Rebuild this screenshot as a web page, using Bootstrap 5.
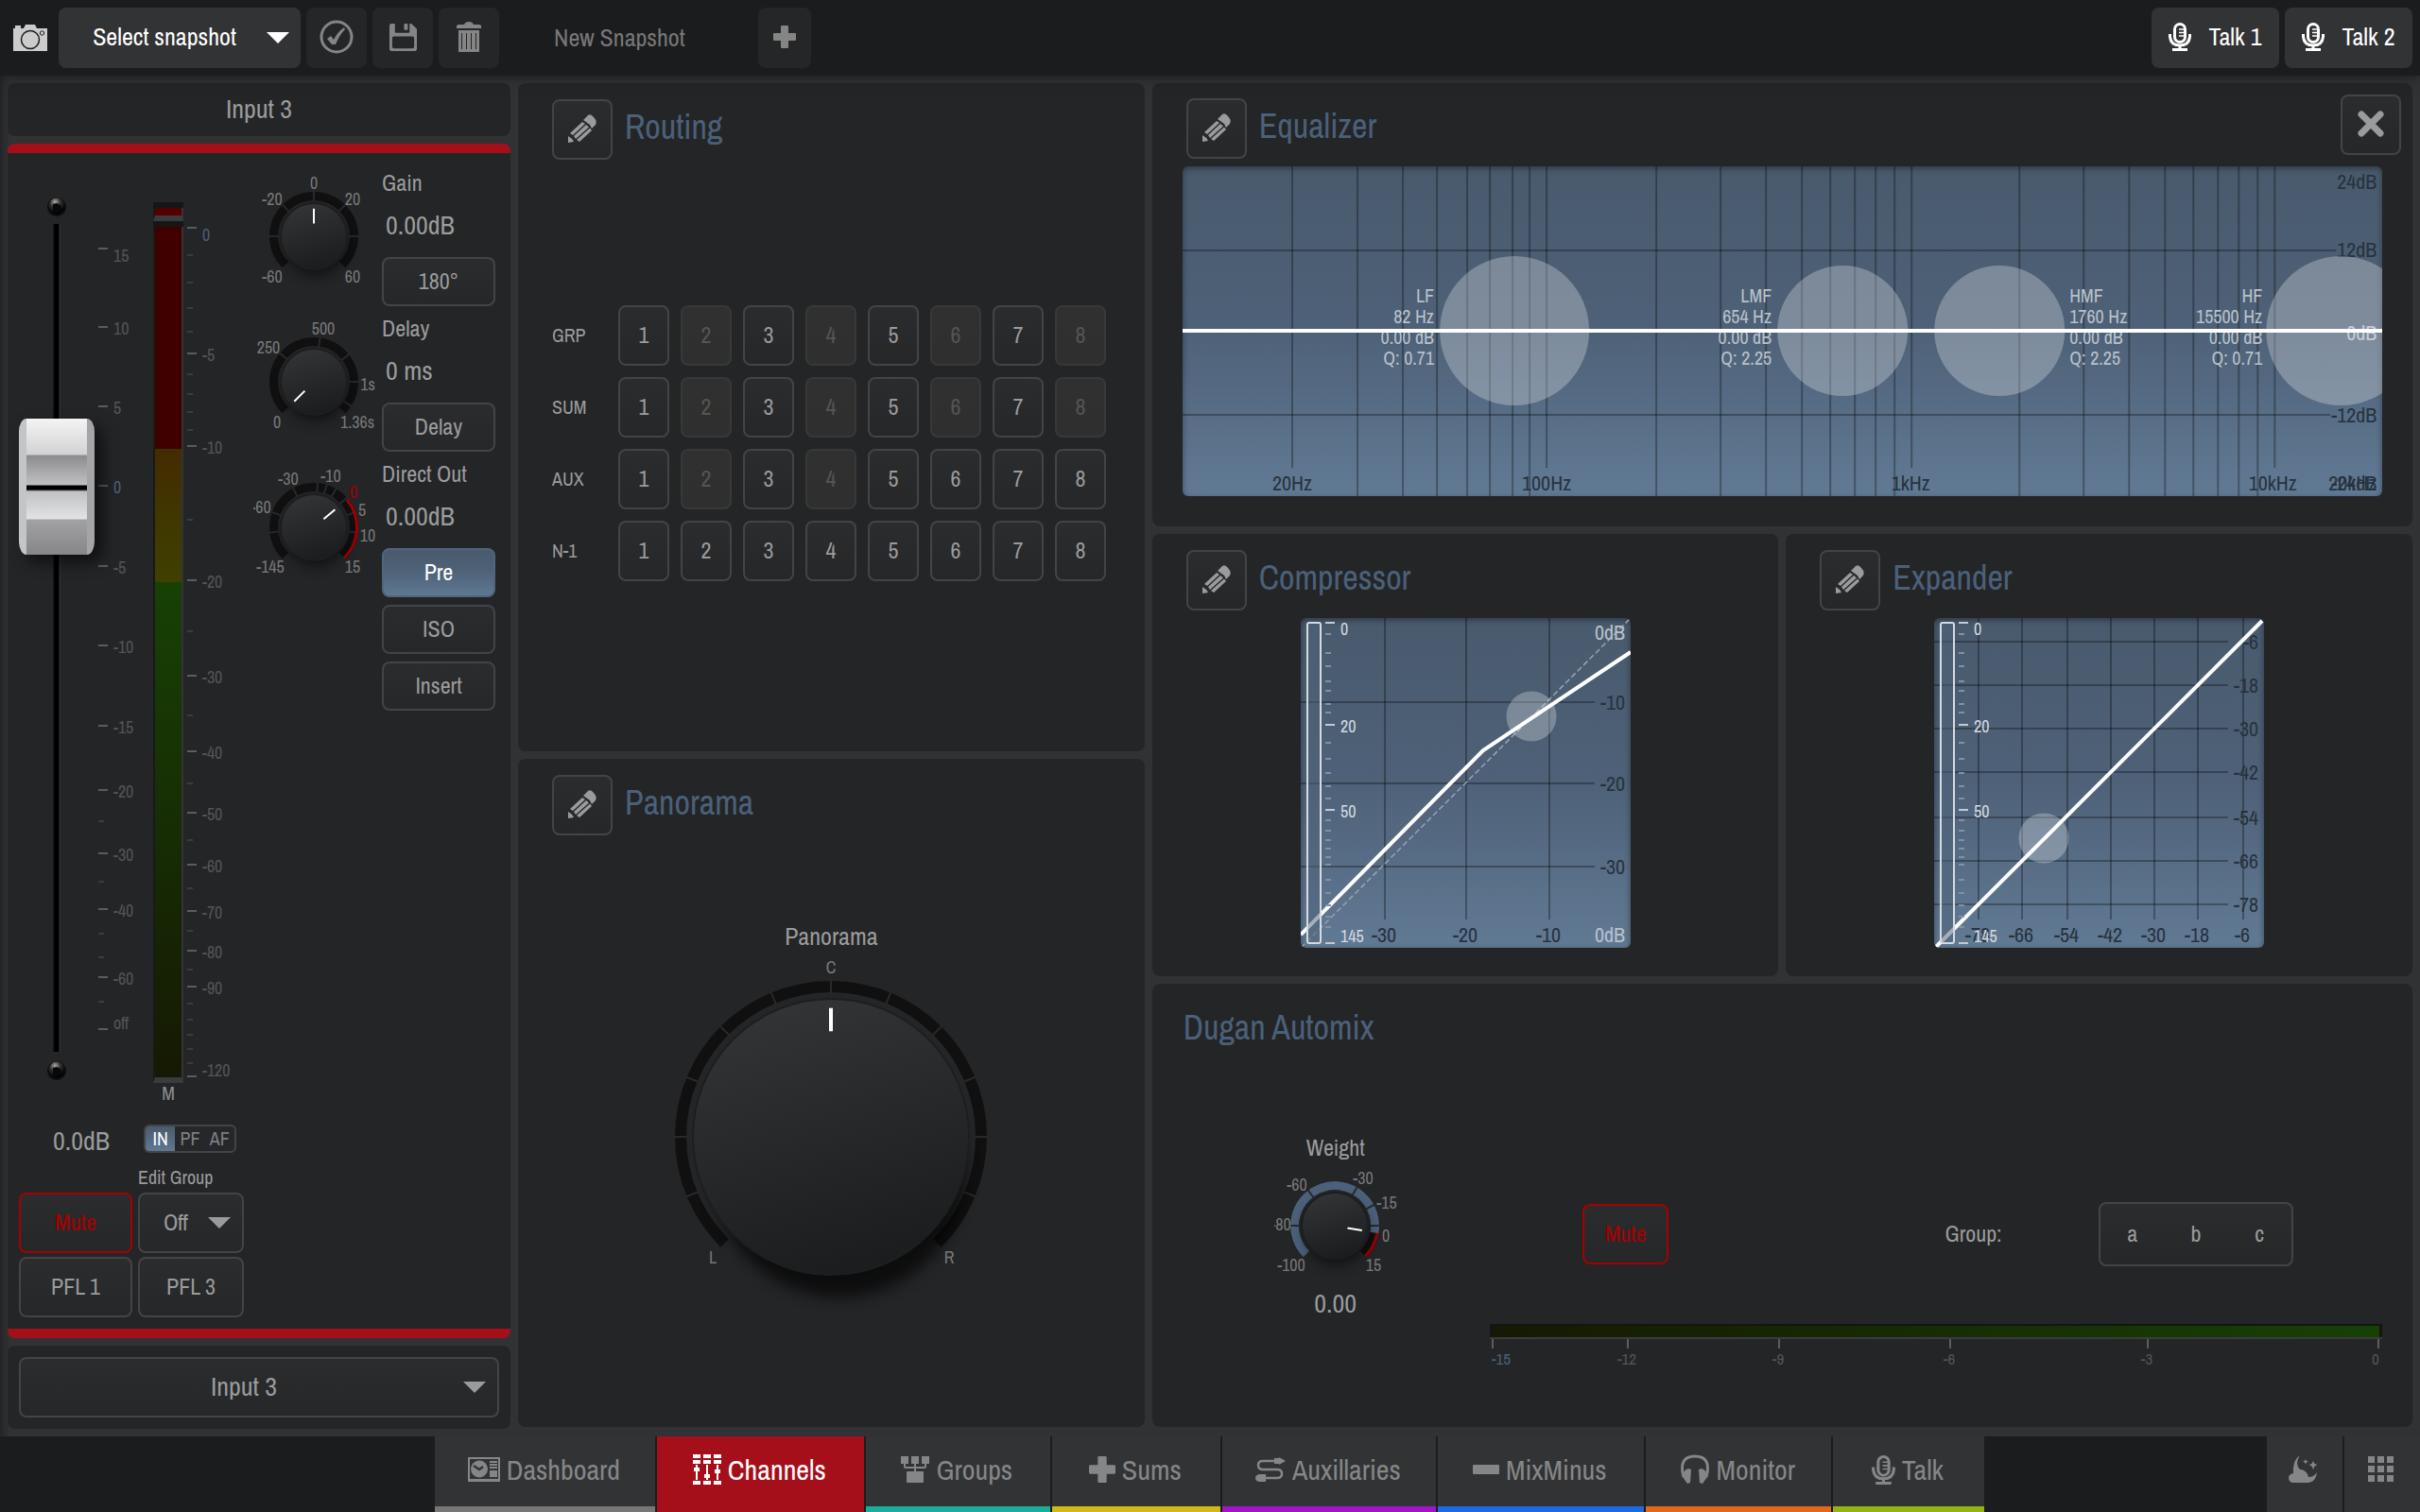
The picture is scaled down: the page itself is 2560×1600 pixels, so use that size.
<!DOCTYPE html>
<html lang="en">
<head>
<meta charset="utf-8">
<meta name="viewport" content="width=device-width, initial-scale=1">
<title>Mixer – Input 3</title>
<link rel="stylesheet" href="https://cdn.jsdelivr.net/npm/bootstrap@5.3.0/dist/css/bootstrap.min.css">
<style>
:root{
  --bar:#1b1c1e; --base:#313234; --panel:#242527; --line:#434446; --ink:#9a9b9c; --dim:#545557;
  --blue:#4b6079; --red:#a60000; --brand:#a50f1a;
  --ui:"Archivo Narrow","Roboto Condensed","Open Sans Condensed","Noto Sans Condensed","Liberation Sans",Arial,sans-serif;
}
body{background:var(--base);color:var(--ink);font-family:var(--ui);font-size:24px;line-height:1.2}
svg text{font-family:var(--ui)}
button,select{font-family:var(--ui)}
.app-shell{min-height:100vh}
.top-strip{background:var(--bar);height:80px;padding:8px 8px 8px 14px;box-shadow:0 0 14px rgba(0,0,0,.5)}
.ctl{display:flex;align-items:center;justify-content:center;border:2px solid var(--line);border-radius:8px;background:linear-gradient(#2b2c2e,#262729);color:var(--ink);font-size:24px;line-height:1;padding:0 0 2px;text-align:center}
.ctl.flat{border:0;background:#252628;color:#858585}
.ctl.lit{border:0;background-color:#323335;background-image:none;color:#fff}
.ctl:disabled{background:linear-gradient(#2f302f,#302f2f);border-color:#373838;color:#545554}
.ctl.primary{background:linear-gradient(#4a5a6d,#4e6177 45%,#5f7892);border-color:#50657d;color:#fff}
.ctl.alarm{border-color:var(--red);color:var(--red)}
.sq{width:64px;height:64px;flex:none}
select.ctl{display:block;appearance:none;text-align:center;text-align-last:center;background-repeat:no-repeat;height:64px}
select.ctl.snap-pick{width:256px;font-size:26px;padding:0 32px 2px 0;margin-left:12px;margin-right:6px;background-image:url("data:image/svg+xml,%3Csvg xmlns='http://www.w3.org/2000/svg' viewBox='0 0 24 12'%3E%3Cpath fill='%23fff' d='M0 0h24L12 12z'/%3E%3C/svg%3E");background-position:right 12px center;background-size:24px 12px}
select.arrow-grey{background-image:url("data:image/svg+xml,%3Csvg xmlns='http://www.w3.org/2000/svg' viewBox='0 0 24 12'%3E%3Cpath fill='%239a9b9c' d='M0 0h24L12 12z'/%3E%3C/svg%3E"),linear-gradient(#2b2c2e,#262729);background-position:right 12px center,0 0;background-size:24px 12px,auto;padding-right:32px}
.tools{gap:6px}
.talk-btn{width:135px;height:64px;gap:18px;font-size:26px}
.snap-name{width:156px;background:none;border:0;color:#777;font:26px var(--ui);padding:0 0 2px;margin:0 60px 0 58px}
.snap-name::placeholder{color:#777;opacity:1}
.pane{background:var(--panel);border-radius:8px}
.work{padding:8px 8px 8px 8px;gap:8px;box-shadow:inset 10px 0 10px -8px rgba(0,0,0,.4)}
.strip-col{width:532px;gap:8px;flex:none}
.strip-body{border-top:10px solid var(--brand);border-bottom:10px solid var(--brand);padding:20px 12px 12px 12px}
.strip-name{height:56px;font-size:28px}
.knob-list{margin-left:10px}
.mods{display:grid;grid-template-columns:repeat(3,minmax(0,1fr));grid-template-rows:repeat(6,minmax(0,1fr));gap:8px;margin-bottom:2px}
.m-route{grid-area:1/1/4/2}.m-pan{grid-area:4/1/7/2}.m-eq{grid-area:1/2/3/4}.m-comp{grid-area:3/2/5/3}.m-exp{grid-area:3/3/5/4}.m-dugan{grid-area:5/2/7/4}
.mods>.pane{padding:17px 36px 0 36px}
.mods>.m-eq{padding:12px 12px 0 36px}
.mods>.m-comp{padding-right:34px}
.mods>.m-dugan{padding:14px 32px 0 33px}
.pane h2{font-size:36px;line-height:64px;margin:0;color:var(--blue);font-weight:400}
.hd{gap:13px}
.hd h2{line-height:58px}
.fader-zone{position:relative;width:238px}
.fader-zone svg{display:block}
.fader{position:absolute;left:0;top:931px;width:876px;height:80px;margin:0;transform-origin:0 0;transform:rotate(-90deg);appearance:none;background:none}
.fader::-webkit-slider-runnable-track{height:80px;background:linear-gradient(transparent 36px,#1a1b1c 36px,#000 38px,#000 42px,#303133 43px,#303133 44px,transparent 44px)}
.fader::-webkit-slider-thumb{appearance:none;width:144px;height:80px;border:0;border-radius:14px/8px;
 background:linear-gradient(#c4c5c7 0 8px,transparent 8px 72px,#a4a5a7 72px),linear-gradient(90deg,#868688,#a2a2a4 37px,#e2e3e5 38px,#c0c1c3 67px,#000 69px,#000 73px,#c0c0c2 74px,#8c8c8e 105px,#d2d2d4 106px,#f4f4f4);
 box-shadow:-8px 8px 16px rgba(0,0,0,.6)}
.knob-row{gap:6px;padding-bottom:12px}
.knob-row .side{width:120px}
.side .cap{height:24px;line-height:22px;display:block}
.val{font-size:28px}
.side .val{height:66px;line-height:64px;padding-left:4px}
.side .ctl{width:120px;height:52px}
.lower{display:grid;grid-template-columns:120px 112px;column-gap:6px;row-gap:4px}
.lower .ctl{height:64px}
.lower .val{padding:2px 0 6px 12px;line-height:34px}
.seg{border:2px solid var(--line);border-radius:6px;height:30px;width:98px;margin:2px 0 0 6px;background:#26272a;overflow:hidden}
.seg button{flex:1;border:0;background:none;color:#7e7f80;font-size:20px;line-height:1;padding:0}
.seg button.on{background:linear-gradient(#4a5a6d,#5f7892);color:#fff}
.edit-cap{grid-column:2;font-size:20px}
.routes{display:grid;grid-template-columns:58px repeat(8,54px);gap:12px;align-items:center;margin:0 0 26px}
.routes .ctl{height:64px}
.routes span{font-size:20px}
.pan-body{padding-bottom:12px;font-size:26px}
.graph{display:block;border-radius:6px;background:linear-gradient(#495a6d,#4e6178 50%,#617a94);box-shadow:inset 0 2px 6px rgba(0,0,0,.4)}
.eq-graph{width:calc(100% - 16px);margin:8px 20px 0 -4px}
.g-line{stroke:#000;stroke-opacity:.3;stroke-width:2;fill:none}
.trace{stroke:#fff;stroke-width:4;fill:none}
.orb{fill:#fff;fill-opacity:.27}
.main-tabs{background:var(--bar);height:80px}
.tab-lead{width:calc(18% - 1px)}
.tab-link{display:flex;align-items:center;justify-content:center;gap:7px;background:#323335;color:#858687;text-decoration:none;border-bottom:6px solid var(--tab,#323335);padding:0 2px 4px 0;margin-right:2px;font-size:30px;height:80px;flex:none}
.tab-link.on{background:var(--brand);color:#fff}
.w1{width:233px}.w2{width:219px}.w3{width:195px}.w4{width:178px}.w5{width:226px}.w6{width:218px}.w7{width:196px}.w8{width:160px}.w9{width:80px}
.auto-grid{display:grid;grid-template-columns:421fr 382fr 162fr 299fr;align-items:center;margin-top:81px}
.auto-grid>*+*{margin-top:14px}
.weight-col{width:322px;text-align:center}
.mute-auto{width:91px;height:64px}
.abc{width:206px;height:68px}
.abc button{flex:1;border:0;background:none;color:var(--ink);padding:0}
</style>
</head>
<body>
<svg width="0" height="0" class="position-absolute" aria-hidden="true">
  <defs>
    <linearGradient id="cap" x1=".3" y1="0" x2=".6" y2="1"><stop offset="0" stop-color="#333436"/><stop offset="1" stop-color="#1b1c1e"/></linearGradient>
    <filter id="soft" x="-50%" y="-50%" width="200%" height="200%"><feGaussianBlur stdDeviation="8"/></filter>
    <radialGradient id="screw" cx=".4" cy=".25" r=".7"><stop offset="0" stop-color="#aaa"/><stop offset=".45" stop-color="#333"/><stop offset="1" stop-color="#000"/></radialGradient>
    <linearGradient id="vu" x1="0" y1="0" x2="0" y2="1"><stop offset="0" stop-color="#174104"/><stop offset="1" stop-color="#161903"/></linearGradient>
    <linearGradient id="vuh" x1="0" y1="0" x2="1" y2="0"><stop offset="0" stop-color="#161903"/><stop offset="1" stop-color="#174104"/></linearGradient>
    <linearGradient id="vy" x1="0" y1="0" x2="0" y2="1"><stop offset="0" stop-color="#432c00"/><stop offset="1" stop-color="#3f4000"/></linearGradient>
  </defs>
  <symbol id="i-camera" viewBox="0 0 36 28"><path fill="currentColor" d="M0 4h2V1h6v3h3l2-4h10l2 4h11v24H0z"/><circle cx="18" cy="16" r="9.500" fill="none" stroke="#1b1c1e" stroke-width="1.500"/><circle cx="30.500" cy="9" r="2.200" fill="none" stroke="#1b1c1e"/></symbol>
  <symbol id="i-check" viewBox="0 0 36 36"><circle cx="18" cy="18" r="16" fill="none" stroke="currentColor" stroke-width="3"/><path fill="currentColor" d="M8 20l4-3 3 4q4-8 11-13l1 2q-6 6-10 16h-4z"/></symbol>
  <symbol id="i-save" viewBox="0 0 32 32"><path fill="currentColor" fill-rule="evenodd" d="M3 1h4v9q0 1 1 1h14q1 0 1-1V1h2l6 6v21q0 3-3 3H4q-3 0-3-3V4q0-3 2-3zM6 15q-2 0-2 2v9q0 2 2 2h20q2 0 2-2v-9q0-2-2-2zM17 2q0-1 1-1h2q1 0 1 1v5q0 1-1 1h-2q-1 0-1-1z"/></symbol>
  <symbol id="i-trash" viewBox="0 0 28 32"><path fill="currentColor" fill-rule="evenodd" d="M1 7V4l2-1h6q1-3 5-3t5 3h6l2 1v3zM3 9h22v23H3zM6 12v17h1V12zm5 0v17h1V12zm5 0v17h1V12zm5 0v17h1V12z"/></symbol>
  <symbol id="i-plus" viewBox="0 0 24 24"><path fill="currentColor" d="M9 0h6q1 0 1 1v7h7q1 0 1 1v6q0 1-1 1h-7v7q0 1-1 1H9q-1 0-1-1v-7H1q-1 0-1-1V9q0-1 1-1h7V1q0-1 1-1z"/></symbol>
  <symbol id="i-mic" viewBox="0 0 24 30"><rect x="6.500" y="1.500" width="11" height="19" rx="5.500" fill="none" stroke="currentColor" stroke-width="3"/><path fill="none" stroke="currentColor" stroke-width="3" d="M1.500 12v3q1 9 10.500 9t10.500-9v-3M12 24v4M4 28.500h16"/><path stroke="currentColor" stroke-width="1.500" d="M11 7h6M11 10.500h6M11 14h6"/></symbol>
  <symbol id="i-pencil" viewBox="0 0 30 30"><path fill="currentColor" d="M0 30v-7q4 2 6 6zM2 20L15 8l3 2L5 22zM6 23L19 11l3 2.500L8 26zM9 27L23 14.500l2 2.500L12 29zM16 6l5-5q3-2 6 2 4 4 2 8l-4 4-2-4z"/></symbol>
  <symbol id="i-close" viewBox="0 0 28 28"><path stroke="currentColor" stroke-width="7" stroke-linecap="round" d="M4 4l20 20M24 4L4 24"/></symbol>
  <symbol id="i-dash" viewBox="0 0 34 26"><path fill="currentColor" fill-rule="evenodd" d="M0 0h34v26H0zM2 2v21h30V2z"/><circle cx="12" cy="12.500" r="9" fill="currentColor"/><path d="M6 9l6 4 4-3" fill="none" stroke="#323335" stroke-width="2.500"/><path stroke="currentColor" stroke-width="2" d="M23 5h8M23 8h8M23 11h8"/><path fill="currentColor" d="M23 14h8v7h-8z"/></symbol>
  <symbol id="i-faders" viewBox="0 0 30 32"><path fill="currentColor" d="M0 0h8v4H0zM11 0h8v4h-8zM22 0h8v4h-8zM0 6h8v4H0zM11 6h8v4h-8zM22 6h8v4h-8zM0 28h8v4H0zM11 28h8v4h-8zM22 28h8v4h-8zM1 14h6v4H1zM12 21h6v4h-6zM23 16h6v4h-6zM3 11h2v16H3zM14 11h2v16h-2zM25 11h2v16h-2z"/></symbol>
  <symbol id="i-groups" viewBox="0 0 30 28"><path fill="currentColor" d="M0 0h8v8H0zM11 0h8v8h-8zM22 0h8v8h-8zM6 17q0-1 1-1h16q1 0 1 1v10q0 1-1 1H7q-1 0-1-1z"/><path d="M4 8v3q0 1 1 1h20q1 0 1-1V8M15 8v9" fill="none" stroke="currentColor" stroke-width="2"/></symbol>
  <symbol id="i-aux" viewBox="0 0 32 26"><path d="M23 4H8Q3 4 3 8.500T8 13h15q5 0 5 4.500T23 22H9" fill="none" stroke="currentColor" stroke-width="2.500"/><path fill="currentColor" d="M20 1h5V0l7 4-7 4V7h-5zM4 18h7v8H4q-4-1-4-4t4-4z"/></symbol>
  <symbol id="i-minus" viewBox="0 0 28 10"><rect width="28" height="10" rx="1" fill="currentColor"/></symbol>
  <symbol id="i-phones" viewBox="0 0 32 32"><path d="M4 24Q-2 2 16 2t12 22" fill="none" stroke="currentColor" stroke-width="3"/><path fill="currentColor" d="M9 15l3 1-1 14-3 1-5-7q0-7 6-9zM23 15l-3 1 1 14 3 1 5-7q0-7-6-9z"/></symbol>
  <symbol id="i-night" viewBox="0 0 32 30"><path fill="currentColor" d="M12 0Q6 9 12 15q5 0 8 5l1 3q6 0 9-5-1 10-9 11H4q-4-1-4-5t5-5Q4 5 12 0zM18 4l1 2 2 .500-2 1-1 2-1-2-2-1 2-.500zM26 6l1.500 3 3 1-3 1.500L26 15l-1.500-3.500-3-1.500 3-1z"/></symbol>
  <symbol id="i-grid" viewBox="0 0 28 28"><path fill="currentColor" d="M0 0h7v7H0zM10 0h7v7h-7zM20 0h7v7h-7zM0 10h7v7H0zM10 10h7v7h-7zM20 10h7v7h-7zM0 20h7v7H0zM10 20h7v7h-7zM20 20h7v7h-7z"/></symbol>
</svg>

<div class="app-shell d-flex flex-column">
  <header class="top-strip d-flex align-items-center position-relative">
    <svg width="36" height="28" color="#ccc" aria-hidden="true"><use href="#i-camera"/></svg>
    <select class="ctl lit snap-pick" aria-label="Snapshot"><option>Select snapshot</option></select>
    <div class="d-flex tools">
      <button class="ctl flat sq" aria-label="Apply snapshot"><svg width="36" height="36"><use href="#i-check"/></svg></button>
      <button class="ctl flat sq" aria-label="Save snapshot"><svg width="31" height="31"><use href="#i-save"/></svg></button>
      <button class="ctl flat sq" aria-label="Delete snapshot"><svg width="28" height="32"><use href="#i-trash"/></svg></button>
    </div>
    <input class="snap-name" placeholder="New Snapshot" aria-label="New snapshot name">
    <button class="ctl flat sq" style="width:56px" aria-label="Add snapshot"><svg width="24" height="24"><use href="#i-plus"/></svg></button>
    <div class="ms-auto d-flex tools">
      <button class="ctl lit talk-btn"><svg width="24" height="30"><use href="#i-mic"/></svg>Talk 1</button>
      <button class="ctl lit talk-btn"><svg width="24" height="30"><use href="#i-mic"/></svg>Talk 2</button>
    </div>
  </header>

  <main class="work d-flex flex-fill">
    <section class="strip-col d-flex flex-column">
      <div class="pane strip-name d-flex align-items-center justify-content-center">Input 3</div>
      <div class="pane strip-body flex-fill d-flex flex-column justify-content-between">
        <div class="d-flex">
          <div class="fader-zone">
            <svg id="scales" width="238" height="988"></svg>
            <input type="range" class="fader" min="0" max="1000" value="719" aria-label="Channel fader">
          </div>
          <div id="knobs" class="knob-list"></div>
        </div>
        <div class="lower">
          <div class="val text-center">0.0dB</div>
          <div class="seg d-flex" role="group" aria-label="Meter source"><button class="on">IN</button><button>PF</button><button>AF</button></div>
          <label for="editgrp" class="edit-cap">Edit Group</label>
          <button class="ctl alarm">Mute</button>
          <select id="editgrp" class="ctl arrow-grey"><option>Off</option></select>
          <button class="ctl">PFL 1</button><button class="ctl">PFL 3</button>
        </div>
      </div>
      <div class="pane" style="padding:12px"><select class="ctl arrow-grey w-100 val" aria-label="Channel"><option>Input 3</option></select></div>
    </section>

    <div class="mods flex-fill">
      <section class="pane m-route d-flex flex-column">
        <div class="hd d-flex"><button class="ctl sq" aria-label="Edit routing"><svg width="30" height="30"><use href="#i-pencil"/></svg></button><h2>Routing</h2></div>
        <div class="flex-fill d-flex align-items-center"><div class="routes" id="routes"></div></div>
      </section>
      <section class="pane m-pan d-flex flex-column">
        <div class="hd d-flex"><button class="ctl sq" aria-label="Edit panorama"><svg width="30" height="30"><use href="#i-pencil"/></svg></button><h2>Panorama</h2></div>
        <div class="pan-body flex-fill d-flex flex-column align-items-center justify-content-center">
          <div>Panorama</div>
          <div id="pan"></div>
        </div>
      </section>
      <section class="pane m-eq">
        <div class="d-flex">
          <div class="hd d-flex pt-1"><button class="ctl sq" aria-label="Edit equalizer"><svg width="30" height="30"><use href="#i-pencil"/></svg></button><h2>Equalizer</h2></div>
          <button class="ctl sq ms-auto" aria-label="Close"><svg width="28" height="28"><use href="#i-close"/></svg></button>
        </div>
        <svg class="graph eq-graph" id="eq" viewBox="0 0 1269 349"></svg>
      </section>
      <section class="pane m-comp">
        <div class="hd d-flex"><button class="ctl sq" aria-label="Edit compressor"><svg width="30" height="30"><use href="#i-pencil"/></svg></button><h2>Compressor</h2></div>
        <svg class="graph mx-auto mt-2" id="comp" width="349" height="349"></svg>
      </section>
      <section class="pane m-exp">
        <div class="hd d-flex"><button class="ctl sq" aria-label="Edit expander"><svg width="30" height="30"><use href="#i-pencil"/></svg></button><h2>Expander</h2></div>
        <svg class="graph mx-auto mt-2" id="exp" width="349" height="349"></svg>
      </section>
      <section class="pane m-dugan d-flex flex-column">
        <h2>Dugan Automix</h2>
        <div class="auto-grid">
          <div class="weight-col"><div>Weight</div><div id="weight"></div><div class="val">0.00</div></div>
          <button class="ctl alarm mute-auto">Mute</button>
          <span>Group:</span>
          <div class="ctl abc" role="group" aria-label="Automix group"><button>a</button><button>b</button><button>c</button></div>
        </div>
        <svg id="gainred" class="ms-auto mt-1" width="944" height="50"></svg>
      </section>
    </div>
  </main>

  <nav class="main-tabs d-flex" aria-label="Sections">
    <div class="tab-lead"></div>
    <a href="#" class="tab-link w1" style="--tab:#777"><svg width="34" height="26"><use href="#i-dash"/></svg>Dashboard</a>
    <a href="#" class="tab-link w2 on" style="--tab:#a50f1a"><svg width="30" height="32"><use href="#i-faders"/></svg>Channels</a>
    <a href="#" class="tab-link w3" style="--tab:#1bae9b"><svg width="30" height="28"><use href="#i-groups"/></svg>Groups</a>
    <a href="#" class="tab-link w4" style="--tab:#d0bb14"><svg width="28" height="28"><use href="#i-plus"/></svg>Sums</a>
    <a href="#" class="tab-link w5" style="--tab:#a015c5"><svg width="32" height="26"><use href="#i-aux"/></svg>Auxillaries</a>
    <a href="#" class="tab-link w6" style="--tab:#1b6ae6"><svg width="28" height="10"><use href="#i-minus"/></svg>MixMinus</a>
    <a href="#" class="tab-link w7" style="--tab:#e2681b"><svg width="32" height="32"><use href="#i-phones"/></svg>Monitor</a>
    <a href="#" class="tab-link w8" style="--tab:#95b315"><svg width="25" height="31"><use href="#i-mic"/></svg>Talk</a>
    <a href="#" class="tab-link w9 ms-auto" aria-label="Night mode"><svg width="32" height="30"><use href="#i-night"/></svg></a>
    <a href="#" class="tab-link w9 me-0" aria-label="Menu"><svg width="28" height="28"><use href="#i-grid"/></svg></a>
  </nav>
</div>
<script src="https://cdn.jsdelivr.net/npm/bootstrap@5.3.0/dist/js/bootstrap.bundle.min.js"></script>
<script>
const $ = id => document.getElementById(id);
const txt = (t, x, y, size, fill, anchor = 'middle') =>
  `<text x="${x}" y="${y}" font-size="${size}" fill="${fill}" text-anchor="${anchor}" dy=".35em">${t}</text>`;
const bar = (x, y, w, h, fill) => `<rect x="${x}" y="${y}" width="${w}" height="${h}" fill="${fill}"/>`;

/* fader scale and level meter, measured from the top of the strip */
(() => {
  let s = '';
  const O = 182;
  [[15,263,8],[10,346,2],[5,430,2],[0,514,2],[-5,599,2],[-10,683,2],[-15,768,2],[-20,836,2],[-30,903,2],[-40,962,2],[-60,1034,2],['off',1089,-6]]
    .forEach(([t,y,d]) => s += bar(84,y-O-1,10,2,'#5b5c5d') + txt(t,100,y-O+d,18,t===0?'#4b6079':'#545557','start'));
  [869,933,988,1013,1060].forEach(y => s += bar(84,y-O-1,6,2,'#3b3c3d'));
  [[0,241,8],[-5,374,2],[-10,472,2],[-20,614,2],[-30,715,2],[-40,795,2],[-50,860,2],[-60,915,2],[-70,964,2],[-80,1006,2],[-90,1044,2],[-120,1139,-6]]
    .forEach(([t,y,d]) => s += bar(178,y-O-1,10,2,'#5b5c5d') + txt(t,194,y-O+d,18,t===0?'#4b6079':'#545557','start'));
  [270,299,326,351,396,417,436,455,550,668,757,829,889,940,985,1026,1062,1079,1095,1110,1125].forEach(y => s += bar(178,y-O-1,6,2,'#3b3c3d'));
  s += bar(142,32,2,932,'#19191a') + bar(172,32,2,932,'#333336') + bar(142,32,32,6,'#161617') + bar(144,38,28,8,'#550000')
     + '<path d="M144 46h28l2 6h-32z" fill="#3a3b3c"/>' + bar(142,52,32,6,'#161617')
     + bar(144,58,28,235,'#400000') + bar(144,293,28,141,'url(#vy)') + bar(144,434,28,524,'url(#vu)')
     + '<path d="M144 958h28l2 6h-32z" fill="#3a3b3c"/>' + txt('M',158,975,20,'#8b8c8d');
  [37,951].forEach(y => s += `<circle cx="40" cy="${y}" r="10" fill="#0c0c0c"/><circle cx="40" cy="${y-1}" r="8.5" fill="url(#screw)"/><path d="M36 ${y-3}l4-1 4 2 1 5-4 3-5-2z" fill="#080808"/>`);
  $('scales').innerHTML = s;
})();

/* rotary control: ring from -135 to 135 degrees, zero at the top */
function knob(o) {
  const {cx, cy, R, t, r} = o, m = R - t/2;
  const p = (a, d) => [cx + d*Math.sin(a*Math.PI/180), cy - d*Math.cos(a*Math.PI/180)].map(v => v.toFixed(1)).join(' ');
  const arc = (a, b, d, w, c) => `<path d="M${p(a,d)}A${d} ${d} 0 ${b-a>180?1:0} 1 ${p(b,d)}" fill="none" stroke="${c}" stroke-width="${w}"/>`;
  const ln = (a, d1, d2, w, c) => `<path d="M${p(a,d1)}L${p(a,d2)}" stroke="${c}" stroke-width="${w}"/>`;
  let s = `<svg class="d-block mx-auto" width="${o.w}" height="${o.h}" role="slider" aria-label="${o.name}" aria-valuetext="${o.v}">`;
  s += arc(-135,135,m,t,'#101011');
  if (o.fill != null) s += arc(-135,o.fill,m,t,'#4b6079');
  o.ticks.forEach(a => s += ln(a,R-t-1,R+1,2,'#28292b'));
  if (o.hot != null) s += arc(o.hot,135,R-1.5,3,'#a00000');
  s += `<circle cx="${cx+r*.06}" cy="${cy+r*.25}" r="${r*.92}" fill="#000" opacity=".65" filter="url(#soft)"/>`;
  s += `<circle cx="${cx}" cy="${cy}" r="${r+2}" fill="#1d1e1f"/><circle cx="${cx}" cy="${cy}" r="${r}" fill="url(#cap)"/>`;
  s += ln(o.at,r*o.in1,r*o.in2,o.pw,'#fff');
  o.labels.forEach(([a,x,y,c]) => s += txt(a,x,y,18,c||'#77787a'));
  return s + '</svg>';
}
const small = o => knob(Object.assign({w:130,h:142,cx:64,cy:68,R:47,t:9,r:34,pw:2,in1:.4,in2:.86},o));
const side = (cap,val,btns) => `<div class="side"><span class="cap">${cap}</span><div class="val">${val}</div><div class="d-flex flex-column gap-2">${btns.map(b=>`<button class="ctl${b==='Pre'?' primary':''}">${b}</button>`).join('')}</div></div>`;
$('knobs').innerHTML = [
  [small({name:'Gain',v:'0 dB',at:0,ticks:[-90,-45,0,45,90],labels:[[0,64,12],[-20,20,29],[20,105,29],[-60,20,111],[60,105,111]]}), side('Gain','0.00dB',['180°'])],
  [small({name:'Delay',v:'0 ms',at:-135,ticks:[-50,8,52,90,123],labels:[[500,74,12],[250,16,32],['1s',121,71],[0,25,111],['1.36s',110,111]]}), side('Delay','0 ms',['Delay'])],
  [small({name:'Direct Out',v:'0 dB',at:50,hot:50,ticks:[-97,-70,-28,5,17,30,48,70,97],labels:[[-30,37,17],[-10,82,14],[0,106,31,'#a00000'],[5,115,50],[10,121,77],[-60,8,47],[15,105,110],[-145,18,110]]}), side('Direct Out','0.00dB',['Pre','ISO','Insert'])]
].map(([k,c]) => `<div class="knob-row d-flex">${k}${c}</div>`).join('');
$('pan').innerHTML = knob({name:'Panorama',v:'C',w:370,h:400,cx:185,cy:196,R:165,t:12,r:145,pw:4,in1:.77,in2:.94,at:0,
  ticks:[-112.5,-90,-67.5,-45,-22.5,0,22.5,45,67.5,90,112.5],labels:[['C',185,17],['L',60,324],['R',310,324]]});
$('weight').innerHTML = small({name:'Weight',v:'0.00',h:134,at:100,fill:100,hot:100,ticks:[-90,-37,30,62,90],
  labels:[[-60,24,25],[-30,94,18],[-15,119,44],[0,118,79],[15,105,110],[-100,18,110],[-80,7,67]]});

const off = {GRP:[2,4,6,8],SUM:[2,4,6,8],AUX:[2,4],'N-1':[]};
$('routes').innerHTML = Object.keys(off).map(k => `<span>${k}</span>` + [1,2,3,4,5,6,7,8].map(n =>
  `<button class="ctl" aria-label="${k} ${n}"${off[k].includes(n)?' disabled':''}>${n}</button>`).join('')).join('');

/* equalizer */
(() => {
  const dark = '#27323e', pale = '#b9c1ca', X = 1251;
  const v = [1367,1436,1484,1520,1552,1576,1600,1618,1636,1752,1820,1868,1906,1936,1962,1984,2004,2022,2136,2204,2252,2290,2320,2346,2368,2388,2406];
  let s = v.map(x => `<path class="g-line" d="M${x-X} 0V${[1367,1636,2022,2406].includes(x)?319:349}"/>`).join('');
  s += '<path class="g-line" d="M0 89H1220M0 263H1214"/>';
  [['20Hz',1367],['100Hz',1636],['1kHz',2021],['10kHz',2404]].forEach(([t,x]) => s += txt(t,x-X,335,22,dark));
  [['24dB',16],['12dB',88],['-12dB',263],['-24dB',335],['20kHz',335]].forEach(([t,y]) => s += txt(t,1263,y,22,dark,'end'));
  [['LF','82 Hz','0.71',1517,'end',1602,79],['LMF','654 Hz','2.25',1874,'end',1949,69],['HMF','1760 Hz','2.25',2189,'start',2115,69],['HF','15500 Hz','0.71',2393,'end',2476,79]]
    .forEach(([n,f,q,x,a,c,r]) => {
      s += `<circle class="orb" cx="${c-X}" cy="174" r="${r}"/>`;
      [n,f,'0.00 dB','Q: '+q].forEach((t,i) => s += txt(t,x-X,137+22*i,20,pale,a));
    });
  s += txt('0dB',1263,176,22,'#c8ced5','end') + '<path class="trace" d="M0 174H1269"/>';
  $('eq').innerHTML = s;
})();

/* dynamics curves with their gain reduction meters */
function dyn(id, o) {
  const dark = '#27323e', pale = '#c3cad2';
  let s = o.v.map(x => `<path class="g-line" d="M${x} 0V319"/>`).join('') + o.h.map(y => `<path class="g-line" d="M0 ${y}H311"/>`).join('');
  o.h.forEach((y,i) => s += txt(o.hl[i],343,y,22,dark,'end'));
  o.v.forEach((x,i) => s += txt(o.vl[i],x-1,335,22,dark));
  s += o.extra + `<circle class="orb" cx="${o.c[0]}" cy="${o.c[1]}" r="26.5"/><path class="trace" d="${o.d}"/>`;
  s += '<rect x="7" y="5" width="14" height="339" rx="2" fill="#4e6178" fill-opacity=".5" stroke="#d5dae0" stroke-width="2"/>';
  [[0,5,12],[20,113,115],[50,203,205],[145,344,337]].forEach(([t,y,l]) => s += bar(26,y-1,10,2,pale) + txt(t,42,l,18,'#d5dae0','start'));
  [17,37,51,67,77,91,100,132,149,164,178,191,214,225,235,244,253,261,277,291,304,316,327].forEach(y => s += bar(26,y-1,6,2,'#8191a1'));
  $(id).innerHTML = s;
}
dyn('comp',{v:[89,175,263],h:[89,175,263],vl:[-30,-20,-10],hl:[-10,-20,-30],c:[244,104],d:'M0 335L193 140L349 36',
  extra:'<path d="M0 349L349 0" stroke="#97a3b0" stroke-width="1.5" stroke-dasharray="6 3"/>' + txt('0dB',343,15,22,'#b9c1ca','end') + txt('0dB',343,335,22,'#b9c1ca','end')});
dyn('exp',{v:[47,93,141,187,233,279,327],h:[25,71,117,163,211,257,303],vl:[-78,-66,-54,-42,-30,-18,-6],hl:[-6,-18,-30,-42,-54,-66,-78],c:[116,233],d:'M2 348L347 3',extra:''});

/* automix gain meter */
$('gainred').innerHTML = bar(0,0,944,16,'#141415') + bar(3,2,938,12,'url(#vuh)') + bar(0,14,944,2,'#3a3b3c')
  + [[-15,3,12],[-12,146,145],[-9,306,305],[-6,487,486],[-3,696,695],[0,940,937]].map(([t,x,l]) => bar(x-1,16,2,10,'#5b5c5d') + txt(t,l,37,17,t===-15?'#4b6079':'#545557')).join('');
</script>
</body>
</html>
